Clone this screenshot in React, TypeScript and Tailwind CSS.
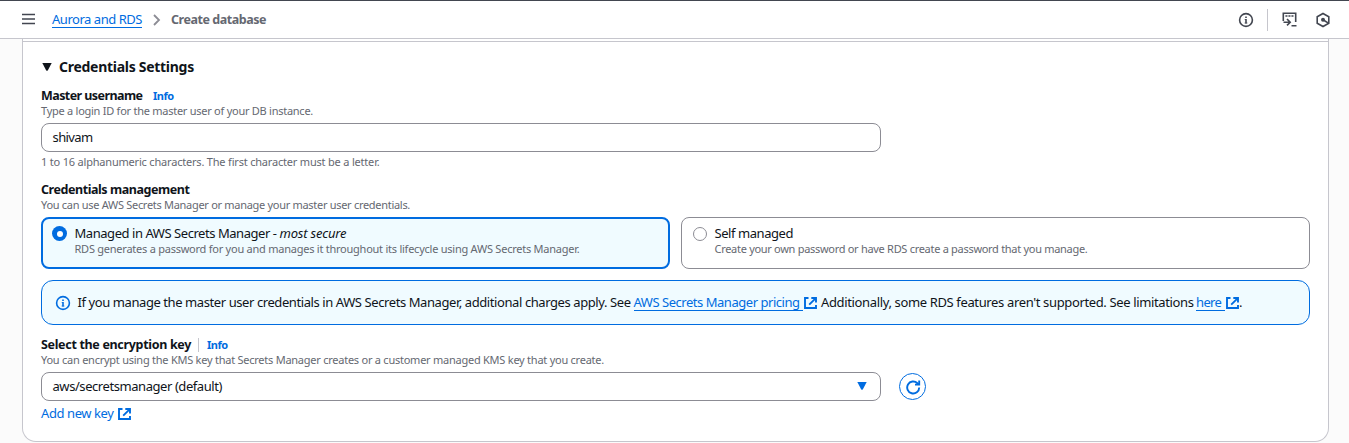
import type { ReactNode } from "react";

function ExternalIcon({ className = "" }: { className?: string }) {
  return (
    <svg className={`h-[14px] w-[13px] shrink-0 ${className}`} viewBox="0 0 13 14" fill="none" stroke="#006ce0" strokeWidth="1.9">
      <path d="M4.5 2H1v10h11V9" />
      <path d="M7.3 2H12v4.6M11.6 2.4L5.2 8.6" />
    </svg>
  );
}

function InfoIcon({ color }: { color: string }) {
  return (
    <svg className="size-4 shrink-0" viewBox="0 0 16 16" fill="none" stroke={color}>
      <circle cx="8" cy="8" r="6.4" strokeWidth="1.6" />
      <path d="M8 7v4.4M8 4.4v1.6" strokeWidth="1.6" />
      <path d="M6.7 7.5H8M6.6 11h2.8" strokeWidth="0.8" />
    </svg>
  );
}

function Label({ children }: { children: ReactNode }) {
  return <span className="text-[12.5px] leading-4 font-bold">{children}</span>;
}

function Info() {
  return <a className="text-[11px] leading-4 font-bold tracking-[-0.45px] text-[#006ce0]">Info</a>;
}

function Hint({ children, className }: { children: ReactNode; className: string }) {
  return <p className={`text-[11px] leading-[14px] text-[#656871] ${className}`}>{children}</p>;
}

export default function App() {
  return (
    <div className="flex h-[443px] w-[1349px] flex-col overflow-hidden bg-[#fbfbfb] font-['Noto_Sans','Open_Sans',sans-serif] text-[13px] whitespace-nowrap text-[#0f141a]">
      <header className="flex h-[39px] shrink-0 items-center border-t border-b border-t-[#424650] border-b-[#c6c6cd] bg-white pr-[18px] pl-[22px]">
        <svg className="mb-px h-3 w-[13px]" viewBox="0 0 13 12" stroke="#424650" strokeWidth="1.7">
          <path d="M0 1.5h13M0 6h13M0 10.5h13" />
        </svg>
        <a className="ml-[17px] h-[17px] w-[90px] border-b border-[#006ce0] leading-[17px] tracking-[-0.47px] text-[#006ce0]">Aurora and RDS</a>
        <svg className="ml-[11px] h-3 w-2" viewBox="0 0 8 12" fill="none" stroke="#8c8c94" strokeWidth="1.8">
          <path d="M1 1l5 5-5 5" />
        </svg>
        <span className="ml-[10px] text-[12.5px] leading-[17px] font-bold tracking-[-0.46px] text-[#656871]">Create database</span>
        <div className="ml-auto flex items-center">
          <InfoIcon color="#424650" />
          <span className="mr-[14px] ml-[13px] h-[22px] w-px bg-[#c6c6cd]" />
          <svg className="size-[15px]" viewBox="0 0 15 15" fill="none" stroke="#424650" strokeWidth="1.6">
            <path d="M1.3 9V1.3h12.4V10" />
            <path d="M3.4 4h8.2" strokeWidth="1.4" strokeDasharray="2.1 0.9" />
            <path d="M1.5 10.2h6M5 7l3.2 3.2L5 13.4M9.5 13.7h5" />
          </svg>
          <svg className="ml-[18px] size-4" viewBox="0 0 16 16" fill="none" stroke="#424650" strokeWidth="1.6">
            <path d="M8 1.5l5.8 3.3v6.4L8 14.5l-5.8-3.3V4.8z" />
            <circle cx="8" cy="7.8" r="2" fill="#424650" stroke="none" />
            <path d="M8 7.8l5.4 3.3" />
          </svg>
        </div>
      </header>

      <main className="mx-[22px] mr-[20px] h-[403px] shrink-0 rounded-b-[14px] border-x border-b border-[#c6c6cd] bg-white">
        <div className="h-[3px] border-b border-[#c6c6cd]" />
        <div className="flex flex-col px-[18px]">
          <h2 className="mt-4 flex h-[18px] items-center text-[14px] leading-[18px] font-bold tracking-[-0.28px]">
            <svg className="mr-[7px] mb-px ml-px h-2 w-[10px]" viewBox="0 0 10 8" fill="#0f141a">
              <path d="M.3 0h9.4L5.9 7.2Q5 8.4 4.1 7.2z" />
            </svg>
            Credentials Settings
          </h2>

          <div className="mt-3 flex h-4 items-center">
            <span className="w-28 tracking-[-0.57px]"><Label>Master username</Label></span>
            <Info />
          </div>
          <Hint className="tracking-[-0.258px]">Type a login ID for the master user of your DB instance.</Hint>
          <div className="mt-[5px] flex h-[29px] w-[840px] items-center rounded-lg border border-[#8c8c94] px-[10.5px] tracking-[-0.6px]">shivam</div>
          <Hint className="mt-[3px] tracking-[-0.194px]">1 to 16 alphanumeric characters. The first character must be a letter.</Hint>

          <div className="mt-[13px] flex h-4 items-center tracking-[-0.436px]">
            <Label>Credentials management</Label>
          </div>
          <Hint className="tracking-[-0.295px]">You can use AWS Secrets Manager or manage your master user credentials.</Hint>

          <div className="mt-[5px] grid grid-cols-2 gap-[11px]">
            <div className="flex h-[52px] rounded-lg border-2 border-[#006ce0] bg-[#f0fbff] pt-[6px] pl-[9px]">
              <span className="mt-px flex size-[15px] items-center justify-center rounded-full bg-[#006ce0]">
                <span className="size-[6px] rounded-full bg-white" />
              </span>
              <div className="ml-[7.5px]">
                <p className="leading-4 tracking-[-0.448px]">
                  Managed in AWS Secrets Manager - <em className="tracking-[-0.2px]">most secure</em>
                </p>
                <Hint className="mt-px tracking-[-0.242px]">RDS generates a password for you and manages it throughout its lifecycle using AWS Secrets Manager.</Hint>
              </div>
            </div>
            <div className="flex h-[52px] rounded-lg border border-[#8c8c94] pt-[7px] pl-[11px]">
              <span className="mt-[2px] size-[14px] rounded-full border border-[#8c8c94]" />
              <div className="ml-[7.5px]">
                <p className="leading-4 tracking-[-0.439px]">Self managed</p>
                <Hint className="mt-px tracking-[-0.294px]">Create your own password or have RDS create a password that you manage.</Hint>
              </div>
            </div>
          </div>

          <div className="mt-[11px] flex h-[45px] items-center rounded-xl border border-[#006ce0] bg-[#f0fbff] pl-[13px]">
            <InfoIcon color="#006ce0" />
            <span className="ml-[6.5px] w-[556px] tracking-[-0.415px]">If you manage the master user credentials in AWS Secrets Manager, additional charges apply. See</span>
            <a className="flex h-[17px] w-[169.5px] border-b border-[#006ce0] leading-[17px] tracking-[-0.469px] text-[#006ce0]">AWS Secrets Manager pricing</a>
            <ExternalIcon className="ml-px" />
            <span className="ml-[4px] w-[375px] tracking-[-0.36px]">Additionally, some RDS features aren't supported. See limitations</span>
            <a className="flex h-[17px] w-[29px] border-b border-[#006ce0] leading-[17px] tracking-[-0.65px] text-[#006ce0]">here</a>
            <ExternalIcon className="ml-px" />
            <span>.</span>
          </div>

          <div className="mt-3 flex h-4 items-center">
            <span className="w-[157px] tracking-[-0.32px]"><Label>Select the encryption key</Label></span>
            <span className="mr-2 h-[14px] w-px bg-[#c6c6cd]" />
            <Info />
          </div>
          <Hint className="tracking-[-0.246px]">You can encrypt using the KMS key that Secrets Manager creates or a customer managed KMS key that you create.</Hint>
          <div className="mt-[5px] flex items-center">
            <div className="flex h-[29px] w-[840px] items-center justify-between rounded-lg border border-[#8c8c94] pr-[13px] pl-[10.5px] tracking-[-0.431px]">
              aws/secretsmanager (default)
              <svg className="mb-px h-2 w-[10px]" viewBox="0 0 10 8" fill="#006ce0">
                <path d="M.3 0h9.4L5.9 7.2Q5 8.4 4.1 7.2z" />
              </svg>
            </div>
            <button className="ml-[18px] flex size-[27px] items-center justify-center rounded-full border border-[#006ce0]">
              <svg className="size-4" viewBox="0 0 16 16" fill="none" stroke="#006ce0" strokeWidth="1.9">
                <path d="M14.2 8.5A6 6 0 1 1 12.4 4.2L14 5.6" />
                <path d="M14.2 1.5V5.6H10" />
              </svg>
            </button>
          </div>
          <a className="mt-[5px] flex h-4 items-center tracking-[-0.411px] text-[#006ce0]">
            Add new key
            <ExternalIcon className="ml-1" />
          </a>
        </div>
      </main>
    </div>
  );
}
